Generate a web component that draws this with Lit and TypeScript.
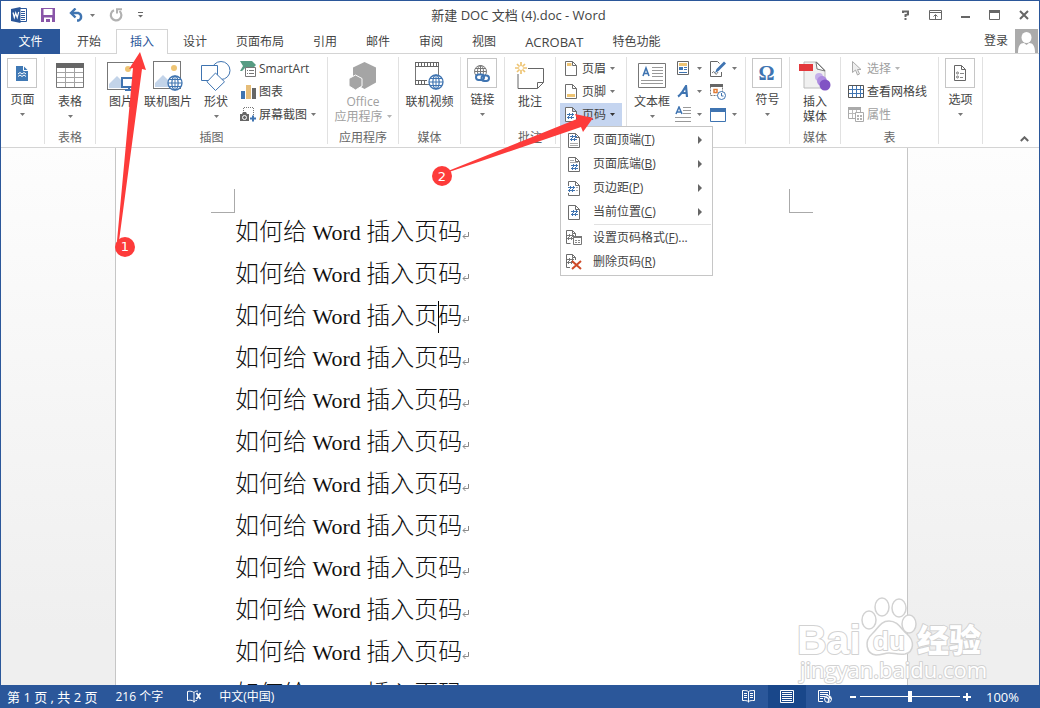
import { LitElement, html, css, svg, nothing, TemplateResult } from "lit";
import { customElement, property, state } from "lit/decorators.js";
import { classMap } from "lit/directives/class-map.js";

const draw = (w: number, h: number, body: unknown) =>
  html`<svg width=${w} height=${h} viewBox="0 0 ${w} ${h}" fill="none" aria-hidden="true">${body}</svg>`;

const BLUE = "#3f74b1";
const INK = "#6d6d6d";
const SAND = "#eec473";

const pageOutline = (c = INK) => svg`<path d="M.5.5h7l4 4v10h-11z M7.5.5v4h4" stroke=${c} fill="#fff"/>`;
const hash = (x: number, y: number, c = BLUE) =>
  svg`<path d="M${x + 2.5} ${y}v3M${x + 1.5} ${y + 3}v3M${x + 5.5} ${y}v3M${x + 4.5} ${y + 3}v3M${x} ${y + 1.5}h7M${x} ${y + 4.5}h7" stroke=${c}/>`;
const globe = (cx: number, cy: number, r: number, c = BLUE) => svg`
  <circle cx=${cx} cy=${cy} r=${r} fill="#fff" stroke=${c} stroke-width="1.3"/>
  <ellipse cx=${cx} cy=${cy} rx=${r * 0.45} ry=${r} stroke=${c} stroke-width="1.2"/>
  <path d="M${cx - r} ${cy}h${r * 2}M${cx} ${cy - r}v${r * 2}M${cx - r * 0.85} ${cy - r / 2}h${r * 1.7}M${cx - r * 0.85} ${cy + r / 2}h${r * 1.7}" stroke=${c}/>`;
const photo = svg`
  <rect x=".5" y="1.5" width="27" height="27" fill="#fff" stroke="#777"/>
  <circle cx="21" cy="8" r="3" fill=${SAND}/>
  <path d="M2 27v-4l8-8 8 8v4z" fill="#c3d4e9"/>`;

const icons: Record<string, TemplateResult> = {
  word: draw(17, 16, svg`
    <path d="M8 1.5h7.5v13H8" fill="#fff" stroke="#2b579a"/>
    <path d="M10 4.5h4M10 6.5h4M10 8.5h4M10 10.5h4M10 12.5h4" stroke="#2b579a"/>
    <path d="M0 2l9.500-2v16L0 14z" fill="#2b579a"/>
    <path d="M2 5.500l1.300 5 1.400-4.500 1.500 4.500 1.500-5.500" stroke="#fff" stroke-width="1.2"/>`),
  save: draw(14, 14, svg`
    <path d="M0 0h14v14H0z" fill="#8955a8"/><path d="M2.500 1h9v6h-9z" fill="#fff"/>
    <path d="M3 9.500h8V14H9v-3H5v3H3z" fill="#fff"/>`),
  undo: draw(16, 14, svg`
    <path d="M2 5h7.500a4 4 0 0 1 0 7.500H8" stroke=${BLUE} stroke-width="2.400"/>
    <path d="M6.500.5L2 5l4.500 4.500" stroke=${BLUE} stroke-width="2.400"/>`),
  redo: draw(14, 14, svg`
    <path d="M5 2.200A5.300 5.300 0 1 0 10.500 3" stroke="#b1b1b1" stroke-width="2.200"/>
    <path d="M8 5.500V1.200h5" stroke="#b1b1b1" stroke-width="2"/>`),
  more: draw(5, 6, svg`<path d="M0 .5h5" stroke="#666"/><path d="M0 3h5L2.500 5.500z" fill="#666"/>`),
  help: draw(8, 10, svg`<path d="M1 3V1.500h5v3L3.500 5v2M2.500 9h2" stroke="#666" stroke-width="2"/>`),
  ribbonMode: draw(13, 10, svg`
    <path d="M.5.500h12v9H.5zM.5 2.500h12" stroke="#666"/><path d="M6.500 9V5M4.500 6.500l2-2 2 2" stroke="#666"/>`),
  minimize: draw(9, 10, svg`<path d="M0 7h9" stroke="#666" stroke-width="2"/>`),
  maximize: draw(11, 10, svg`<path d="M.5.500h10v9H.5z" stroke="#666"/><path d="M0 1.500h11" stroke="#666" stroke-width="3"/>`),
  close: draw(10, 10, svg`<path d="M1 1l8 8M9 1L1 9" stroke="#666" stroke-width="2"/>`),
  avatar: draw(23, 24, svg`
    <path d="M0 0h23v24H0z" fill="#ababab"/><ellipse cx="11.500" cy="8.500" rx="5" ry="5.500" fill="#fff"/>
    <path d="M3 24c0-7 2-10 6-10l2.500 2 2.500-2c4 0 6 3 6 10z" fill="#fff"/>`),
  pages: draw(12, 15, svg`
    <path d="M0 0h7.500L12 4.500V15H0z" fill="#4079b5"/><path d="M7.500 0v4.500H12" stroke="#fff"/>
    <path d="M2 8l2-1.500 2 1.500 2-1.500 2 1.500M2 10.500l2-1.500 2 1.500 2-1.500 2 1.500" stroke="#fff"/>`),
  table: draw(28, 26, svg`
    <path d="M.5.500h27v24H.5z" fill="#fff" stroke="#777"/><path d="M0 0h28v5H0z" fill="#666"/>
    <path d="M1 9.500h26M1 14.500h26M1 19.500h26M9.500 5v19M18.500 5v19" stroke="#a3a3a3"/>`),
  picture: draw(28, 30, svg`${photo}
    <path d="M15 17h14v9H15z" fill="#fff" stroke=${BLUE} stroke-width="2"/><path d="M18 29h8M22 26v3" stroke=${BLUE} stroke-width="2"/>`),
  onlinePicture: draw(30, 31, svg`${photo}${globe(22, 23, 7)}`),
  shapes: draw(30, 30, svg`
    <circle cx="20" cy="9.500" r="9" stroke=${BLUE} fill="#fff"/>
    <path d="M.5 4.500h16v15H.5z" fill="#fff" stroke=${BLUE}/><path d="M14.500 12l9 8.800-9 8.700-8.500-8.700z" fill="#fff" stroke=${BLUE}/>`),
  smartArt: draw(16, 16, svg`
    <path d="M0 0h12l4 4-3 3H5L2 10H0l3-5z" fill="#579c83"/>
    <path d="M5.500 6.500h10v9h-10z" fill="#fff" stroke="#777"/><path d="M7 9.500h1M9 9.500h5M7 12.500h1M9 12.500h5" stroke="#777"/>`),
  chart: draw(15, 14, svg`
    <path d="M0 6h4v8H0z" fill=${BLUE}/><path d="M5 0h5v14H5z" fill="#e6bd79"/><path d="M11 3h4v11h-4z" fill="#666"/>`),
  screenshot: draw(16, 15, svg`
    <path d="M3.500 4V.5h10V8" stroke="#777" stroke-dasharray="1 1"/>
    <path d="M0 7h2l1-2h3l1 2h2v7H0z" fill="#666"/><circle cx="4.500" cy="10.500" r="2" stroke="#fff"/>
    <path d="M10 11.500h6M13 8.500v6" stroke=${BLUE} stroke-width="2"/>`),
  office: draw(28, 28, svg`
    <path d="M15.500 0L27 5.500v15L15.500 27 4 20.500v-15z" fill="#a5a5a5"/>
    <path d="M6.500 13l6.500 3.500v7.500L6.500 28 0 24v-7.500z" fill="#a5a5a5" stroke="#fff"/>`),
  video: draw(29, 28, svg`
    <path d="M.5.500h23v22H.5z" fill="#fff" stroke="#777"/><path d="M0 0h24v5H0zM0 18h12v5H0z" fill="#666"/>
    <path d="M1 2.500h22M1 20.500h11" stroke="#fff" stroke-width="3" stroke-dasharray="2 1"/>
    ${globe(21, 20, 7)}`),
  link: draw(16, 17, svg`
    <circle cx="6.500" cy="6.500" r="6" stroke="#777"/><ellipse cx="6.500" cy="6.500" rx="3" ry="6" stroke="#777"/><path d="M.5 6.500h12M6.500.5v12M1 3.500h11" stroke="#777"/>
    <rect x="2" y="9.500" width="8" height="5.500" rx="2.700" fill="#fff" stroke=${BLUE} stroke-width="2"/>
    <rect x="7.500" y="10.500" width="7.500" height="5.500" rx="2.700" stroke=${BLUE} stroke-width="2"/>`),
  comment: draw(30, 28, svg`
    <path d="M3 12v14.500h19.500l6-6V6.500H13" stroke="#666"/><path d="M22.500 26.500v-6h6" stroke="#666"/>
    <path d="M6 0v12M0 6h12M2 2l8 8M10 2l-8 8" stroke=${SAND} stroke-width="1.700"/><circle cx="6" cy="6" r="2" fill="#fff"/>`),
  header: draw(12, 15, svg`${pageOutline()}<path d="M2 2h4.500v3H2z" fill=${SAND}/>`),
  footer: draw(12, 15, svg`${pageOutline()}<path d="M2 10h8v3H2z" fill=${SAND}/>`),
  pageNumber: draw(12, 15, svg`${pageOutline()}${hash(2, 6)}`),
  textBox: draw(28, 26, svg`
    <path d="M.5.500h27v24H.5z" fill="#fff" stroke="#777"/><path d="M5 13L8 5l3 8M6 10.500h4" stroke=${BLUE} stroke-width="1.600"/>
    <path d="M14 4.500h11M14 7.500h11M14 10.500h11M14 13.500h11M3 17.500h22M3 20.500h22" stroke="#999"/>`),
  quickParts: draw(12, 15, svg`
    <path d="M.5.500h11v13H.5z" fill="#fff" stroke="#666"/><path d="M2 2h8v3H2z" fill=${SAND}/>
    <path d="M2 6h4v3H2z" fill=${BLUE}/><path d="M7 6.500h3M7 8.500h3M2 11.500h8" stroke=${BLUE}/>`),
  wordArt: draw(13, 13, svg`<path d="M1 11.500C5 9 7 4 9 1l1 11M3.500 8H10" stroke=${BLUE} stroke-width="2.200"/>`),
  dropCap: draw(16, 17, svg`
    <path d="M1 8l3-7 3 7M2 6h4" stroke=${BLUE} stroke-width="1.500"/><path d="M8 1.500h8M8 4.500h8M8 7.500h8M0 11.500h16M0 15.500h16" stroke="#999"/>`),
  signature: draw(16, 16, svg`
    <path d="M11.500 11v4.500H.5V.5h7l2 2" stroke="#666"/><path d="M2 12q2-3 3 0t3-1" stroke="#777"/><path d="M5 12l1.500-4L14 .5l2 2-7.500 7.500z" fill=${BLUE}/>`),
  dateTime: draw(16, 16, svg`
    <path d="M.5.500h12v11H.5z" stroke="#777" stroke-dasharray="2 1" fill="#fff"/><path d="M0 0h13v3H0z" fill="#666"/>
    <path d="M4 5.500h3v3H4z" stroke="#e17b35" stroke-width="1.500"/><circle cx="11.500" cy="11.500" r="4" fill="#fff" stroke=${BLUE}/><path d="M11.500 9v3h2" stroke=${BLUE}/>`),
  object: draw(16, 14, svg`<path d="M.5.500h15v13H.5z" fill="#fff" stroke=${BLUE}/><path d="M0 0h16v4H0z" fill=${BLUE}/>`),
  media: draw(32, 32, svg`
    <path d="M5 2h13l8 8v18H5z" fill="#f0f0f0" stroke="#bbb"/><path d="M17 2l9 9-8-2z" fill="#fff" stroke="#777"/>
    <path d="M0 4h14v7H0z" fill="#e3373b"/><circle cx="20" cy="17" r="4" fill="#c5b0ea"/><circle cx="23" cy="21" r="5" fill="#ad8be0"/><circle cx="26" cy="25" r="5.500" fill="#8153c4"/>`),
  select: draw(9, 15, svg`<path d="M.5.500v11l3-2.500 2 5 2-1-2-4.500h3.500z" fill="#eee" stroke="#aaa"/>`),
  gridlines: draw(16, 13, svg`
    <path d="M1 4.500h14M1 8.500h14M4.500 1v11M8.500 1v11M12.500 1v11" stroke=${BLUE}/><path d="M.5.500h15v12H.5z" stroke="#555"/>`),
  properties: draw(16, 15, svg`
    <path d="M.5.500h12v11H.5z" stroke="#aaa"/><path d="M0 0h13v3H0z" fill="#aaa"/><path d="M1 6.500h11M4.500 3v8M8.500 3v8" stroke="#bbb"/>
    <path d="M7.500 5.500h8v9h-8z" fill="#fff" stroke="#aaa"/><path d="M9 9h2M12 9h2M9 12h2M12 12h2" stroke="#999" stroke-width="1.500"/>`),
  options: draw(12, 16, svg`
    <path d="M.5.500h7l4 4v11H.5zM7.500.5v4h4" stroke="#666"/><circle cx="3.500" cy="8" r="1" stroke="#777"/><circle cx="3.500" cy="12" r="1" stroke="#777"/><path d="M6 8.500h4M6 12.500h3" stroke="#888"/>`),
  pageTop: draw(12, 15, svg`${pageOutline()}${hash(2, 2)}<path d="M2 10.500h8M2 12.500h8" stroke="#aaa"/>`),
  pageBottom: draw(12, 15, svg`${pageOutline()}<path d="M2 3.500h4M2 5.500h8" stroke="#aaa"/>${hash(3, 7)}`),
  pageMargin: draw(12, 15, svg`${pageOutline()}<path d="M0 5h7v7H0z" fill="#fff"/>${hash(0, 5)}<path d="M8 6.500h2M8 9.500h2" stroke="#aaa"/>`),
  current: draw(12, 15, svg`${pageOutline()}${hash(3, 5)}`),
  format: draw(16, 16, svg`
    <path d="M4.500 13.500H.5V.5h6l3 3V6M6.500.5v3h3" stroke=${INK}/>${hash(1, 4, "#777")}
    <path d="M7.500 6.500h8v8h-8z" fill="#fff" stroke="#777"/><path d="M7 7h9" stroke="#777" stroke-width="2"/><path d="M9 10.500h2M12 10.500h2M9 12.500h2M12 12.500h2" stroke="#888"/>`),
  remove: draw(16, 16, svg`
    <path d="M4 13.500H.5V.5h6l3 3V6M6.500.5v3h3" stroke=${INK}/>${hash(1, 4, "#777")}
    <path d="M6 7l9 8M15 7l-9 8" stroke="#cf4a28" stroke-width="2"/>`),
  proof: draw(15, 13, svg`
    <path d="M7 11.500C5 10 3 10 .5 10.500v-9C3 1 5 1 7 2.500v10M7 2.500C8 1.500 9 1 11 1M7 12c1-1.500 2-1.500 3-1.500" stroke="#fff"/>
    <path d="M9.500 3l4 6M13.500 3l-4 6" stroke="#fff" stroke-width="1.600"/>`),
  readMode: draw(13, 13, svg`
    <path d="M6.500 1.500C5 .5 3 .5.500.5v10c2.500 0 4.500 0 6 1 1.500-1 3.500-1 6-1V.5c-2.500 0-4.500 0-6 1v11" stroke="#fff"/>
    <path d="M2 3.500h3M2 5.500h3M2 7.500h3M8 3.500h3M8 5.500h3M8 7.500h3" stroke="#fff"/>`),
  printLayout: draw(14, 13, svg`<path d="M.5.500h13v12H.5zM2 2.500h10M2 4.500h10M2 6.500h10M2 8.500h10M2 10.500h10" stroke="#fff"/>`),
  webLayout: draw(14, 13, svg`
    <path d="M5 11.500H.5V.5h11V5M2 2.500h8M2 4.500h8M2 6.500h5M2 8.500h3" stroke="#fff"/><circle cx="10" cy="9" r="3.500" fill="#2b579a" stroke="#fff"/><path d="M7.500 7l2.500 1 1 2-1 2M11 6l1 2h1" stroke="#fff" stroke-width="1.500"/>`),
  collapse: draw(9, 6, svg`<path d="M.8 5l3.700-3.700L8.200 5" stroke="#666" stroke-width="2"/>`),
  enter: draw(8, 8, svg`<path d="M6.500 0v4.500H1M3.500 2L1 4.500 3.500 7" stroke="#888"/>`),
};

const caret = html`<svg class="caret" width="5" height="3" viewBox="0 0 5 3" aria-hidden="true"><path d="M0 0h5L2.500 3z" fill="currentColor"/></svg>`;

const buttonReset = css`
  button { font: inherit; color: inherit; background: none; border: 0; padding: 0; margin: 0; cursor: default; }
  svg { display: block; flex: none; }
`;

@customElement("ribbon-button")
class RibbonButton extends LitElement {
  @property() icon = "";
  @property() label = "";
  @property() second = "";
  @property({ type: Boolean }) boxed = false;
  @property({ type: Boolean }) menu = false;
  @property({ type: Boolean }) off = false;

  static styles = [buttonReset, css`
    :host { display: block; flex: none; }
    .big { display: flex; flex-direction: column; align-items: center; width: 100%; line-height: 15px; white-space: nowrap; }
    .art { display: flex; align-items: center; justify-content: center; height: 37px; }
    .boxed .art { box-sizing: border-box; width: 30px; height: 30px; margin: 1px 2px 4px 0; border: 1px solid #c6c6c6; }
    .off { color: #a0a0a0; }
    .tail { display: flex; align-items: center; justify-content: center; gap: 4px; height: 15px; }
    .caret { color: #777; }
    .off .caret { color: #b5b5b5; }
    .omega { font: bold 20px/26px "Liberation Serif", serif; color: #3f74b1; }
  `];

  render() {
    return html`<button class=${classMap({ big: true, boxed: this.boxed, off: this.off })} ?disabled=${this.off}>
      <span class="art">${this.icon === "omega" ? html`<span class="omega">Ω</span>` : icons[this.icon]}</span>
      <span>${this.label}</span>
      ${this.second || this.menu ? html`<span class="tail">${this.second}${this.menu ? caret : nothing}</span>` : nothing}
    </button>`;
  }
}

@customElement("ribbon-row")
class RibbonRow extends LitElement {
  @property() icon = "";
  @property() label = "";
  @property() name = "";
  @property({ type: Boolean }) menu = false;
  @property({ type: Boolean }) off = false;
  @property({ type: Boolean }) open = false;
  @property({ type: Boolean }) inset = false;

  static styles = [buttonReset, css`
    :host { display: block; }
    .row { display: flex; align-items: center; gap: 3px; height: 23px; width: 100%; white-space: nowrap; }
    .inset { padding-left: 3px; }
    .art { display: flex; justify-content: center; width: 16px; }
    .caret { color: #777; margin-left: 1px; }
    .bare .caret { margin-left: 3px; }
    .off { color: #a0a0a0; }
    .off .caret { color: #b5b5b5; }
    .open { background: #c5d5f0; }
    .open .caret { color: #333; }
  `];

  render() {
    const cls = { row: true, off: this.off, open: this.open, inset: this.inset, bare: !this.label };
    return html`<button class=${classMap(cls)} ?disabled=${this.off} aria-label=${this.label || this.name}>
      <span class="art">${icons[this.icon]}</span>
      ${this.label ? html`<span>${this.label}</span>` : nothing}
      ${this.menu ? caret : nothing}
    </button>`;
  }
}

@customElement("page-number-menu")
class PageNumberMenu extends LitElement {
  private items = [
    { icon: "pageTop", text: "页面顶端", key: "T", sub: true },
    { icon: "pageBottom", text: "页面底端", key: "B", sub: true },
    { icon: "pageMargin", text: "页边距", key: "P", sub: true },
    { icon: "current", text: "当前位置", key: "C", sub: true },
    { icon: "format", text: "设置页码格式", key: "F", tail: "...", rule: true },
    { icon: "remove", text: "删除页码", key: "R" },
  ];

  static styles = [buttonReset, css`
    :host { display: block; box-sizing: border-box; width: 153px; padding: 1px; background: #fff; border: 1px solid #c6c6c6; }
    .item { display: flex; align-items: center; width: 100%; height: 24px; white-space: nowrap; color: #444; }
    .art { display: flex; justify-content: center; width: 24px; margin-right: 7px; }
    .text { flex: 1; text-align: left; }
    .arrow { margin-right: 9px; }
    .rule { height: 1px; margin: 0 0 1px 32px; background: #e1e1e1; }
  `];

  render() {
    return this.items.map((i) => html`
      ${i.rule ? html`<div class="rule"></div>` : nothing}
      <button class="item" role="menuitem">
        <span class="art">${icons[i.icon]}</span>
        <span class="text">${i.text}(<u>${i.key}</u>)${i.tail ?? ""}</span>
        ${i.sub ? html`<svg class="arrow" width="4" height="8" viewBox="0 0 4 8"><path d="M0 0l4 4-4 4z" fill="#666"/></svg>` : nothing}
      </button>`);
  }
}

@customElement("word-ribbon")
class WordRibbon extends LitElement {
  static styles = [buttonReset, css`
    :host { display: flex; box-sizing: border-box; height: 94px; padding: 3px 0; border-bottom: 1px solid #d4d4d4; background: #fff; }
    .group { display: flex; flex-direction: column; box-sizing: border-box; flex: none; height: 87px; border-right: 1px solid #e1e1e1; }
    .body { display: flex; justify-content: center; flex: 1; }
    .start { justify-content: flex-start; }
    .caption { height: 14px; line-height: 16px; text-align: center; color: #666; }
    .w44 { width: 44px; } .w51 { width: 51px; } .w62 { width: 62px; } .w71 { width: 71px; }
    .w98 { width: 98px; } .w119 { width: 119px; } .w232 { width: 232px; }
    .b40 { width: 40px; } .b42 { width: 42px; } .b54 { width: 54px; }
    .in4 { padding: 0 4px; } .in5 { padding: 0 5px; } .in7 { padding-left: 7px; }
    .list { display: flex; flex-direction: column; }
    .gap3 { margin-left: 3px; } .gap8 { margin-left: 8px; }
    .wide { width: 62px; }
    .anchor { position: relative; z-index: 2; }
    .popup { position: absolute; left: 0; top: 100%; }
    .end { display: flex; flex: 1; align-items: flex-end; justify-content: flex-end; padding: 0 10px 2px 0; }
  `];

  private group(width: string, caption: string, body: unknown, extra = "") {
    return html`<section class="group ${width}"><div class="body ${extra}">${body}</div><div class="caption">${caption}</div></section>`;
  }

  render() {
    return html`
      ${this.group("w44", "", html`<ribbon-button icon="pages" label="页面" boxed menu></ribbon-button>`)}
      ${this.group("w51", "表格", html`<ribbon-button icon="table" label="表格" menu></ribbon-button>`)}
      ${this.group("w232", "插图", html`
        <ribbon-button class="b40" icon="picture" label="图片"></ribbon-button>
        <ribbon-button class="b54" icon="onlinePicture" label="联机图片"></ribbon-button>
        <ribbon-button class="b42" icon="shapes" label="形状" menu></ribbon-button>
        <div class="list gap3">
          <ribbon-row icon="smartArt" label="SmartArt"></ribbon-row>
          <ribbon-row icon="chart" label="图表"></ribbon-row>
          <ribbon-row icon="screenshot" label="屏幕截图" menu></ribbon-row>
        </div>`, "start in5")}
      ${this.group("w71", "应用程序", html`<ribbon-button icon="office" label="Office" second="应用程序" menu off></ribbon-button>`)}
      ${this.group("w62", "媒体", html`<ribbon-button icon="video" label="联机视频"></ribbon-button>`)}
      ${this.group("w44", "", html`<ribbon-button icon="link" label="链接" boxed menu></ribbon-button>`)}
      ${this.group("w51", "批注", html`<ribbon-button icon="comment" label="批注"></ribbon-button>`)}
      ${this.group("w71", "", html`
        <div class="list wide">
          <ribbon-row icon="header" label="页眉" menu inset></ribbon-row>
          <ribbon-row icon="footer" label="页脚" menu inset></ribbon-row>
          <div class="anchor">
            <ribbon-row icon="pageNumber" label="页码" menu inset open></ribbon-row>
            <page-number-menu class="popup" role="menu"></page-number-menu>
          </div>
        </div>`, "start in4")}
      ${this.group("w119", "", html`
        <ribbon-button class="b40" icon="textBox" label="文本框" menu></ribbon-button>
        <div class="list gap3">
          <ribbon-row icon="quickParts" name="文档部件" menu></ribbon-row>
          <ribbon-row icon="wordArt" name="艺术字" menu></ribbon-row>
          <ribbon-row icon="dropCap" name="首字下沉" menu></ribbon-row>
        </div>
        <div class="list gap8">
          <ribbon-row icon="signature" name="签名行" menu></ribbon-row>
          <ribbon-row icon="dateTime" name="日期和时间"></ribbon-row>
          <ribbon-row icon="object" name="对象" menu></ribbon-row>
        </div>`, "start in5")}
      ${this.group("w44", "", html`<ribbon-button icon="omega" label="符号" boxed menu></ribbon-button>`)}
      ${this.group("w51", "媒体", html`<ribbon-button icon="media" label="插入" second="媒体"></ribbon-button>`)}
      ${this.group("w98", "表", html`
        <div class="list">
          <ribbon-row icon="select" label="选择" menu off></ribbon-row>
          <ribbon-row icon="gridlines" label="查看网格线"></ribbon-row>
          <ribbon-row icon="properties" label="属性" off></ribbon-row>
        </div>`, "start in7")}
      ${this.group("w44", "", html`<ribbon-button icon="options" label="选项" boxed menu></ribbon-button>`)}
      <div class="end"><button aria-label="折叠功能区">${icons.collapse}</button></div>`;
  }
}

@customElement("word-page")
class WordPage extends LitElement {
  static styles = css`
    :host { display: flex; justify-content: center; overflow: hidden; padding-right: 17px; background: linear-gradient(#fdfdfd, #efefef 90%); }
    .sheet { box-sizing: border-box; width: 793px; flex: none; background: #fff; border: solid #c6c6c6; border-width: 0 1px; padding: 41px 94px 0 95px; }
    .marks { display: flex; justify-content: space-between; height: 22px; }
    .mark { box-sizing: border-box; width: 24px; height: 24px; border-bottom: 1px solid #aaa; }
    .left { border-right: 1px solid #aaa; }
    .right { border-left: 1px solid #aaa; }
    .text { padding-left: 24px; }
    .line { display: flex; align-items: center; margin: 0; height: 42px; color: #111; font: 300 24px/42px "Liberation Serif", "Noto Sans CJK SC", serif; white-space: pre; }
    .latin { font-size: 22px; }
    .cursor { position: relative; }
    .cursor::before { content: ""; position: absolute; left: 0; top: -2px; width: 1px; height: 32px; background: #000; }
    svg { display: block; margin-top: 8px; }
  `;
  render() {
    return html`<article class="sheet">
      <div class="marks"><span class="mark left"></span><span class="mark right"></span></div>
      <div class="text">${Array.from({ length: 12 }, (_, i) => html`<p class="line"><span>如何给<span class="latin"> Word </span>插入页${i === 2 ? html`<span class="cursor">码</span>` : "码"}</span>${icons.enter}</p>`)}</div>
    </article>`;
  }
}

@customElement("app-root")
class AppRoot extends LitElement {
  @state() private tab = "插入";
  private tabs = ["开始", "插入", "设计", "页面布局", "引用", "邮件", "审阅", "视图", "ACROBAT", "特色功能"];

  static styles = [buttonReset, css`
    :host { display: flex; flex-direction: column; position: relative; box-sizing: border-box; height: 100vh; overflow: hidden; border: 1px solid #2b579a; border-bottom: 0; background: #fff; color: #444; font: 12px/16px "Open Sans", "Noto Sans CJK SC", sans-serif; }
    .title { display: flex; align-items: center; height: 28px; flex: none; padding: 0 10px; }
    .quick, .window { display: flex; align-items: center; flex: 1; }
    .quick .undo { margin-left: 14px; }
    .quick .save { margin-left: 13px; }
    .quick .drop { margin: 0 0 0 5px; color: #777; }
    .quick .redo { margin-left: 14px; }
    .quick .more { margin-left: 15px; }
    .window { justify-content: flex-end; gap: 19px; }
    h1 { margin: 0 3px 0 0; font-size: 13px; font-weight: 400; }
    .tabs { display: flex; height: 25px; flex: none; border-bottom: 1px solid #d4d4d4; box-sizing: border-box; }
    .file { width: 59px; height: 25px; margin-right: 3px; background: #2b579a; color: #fff; }
    .tab { box-sizing: border-box; height: 25px; padding: 0 14px; margin-right: 1px; }
    .latin { font-size: 13px; }
    .on { padding: 0 13px; border: 1px solid #d4d4d4; border-bottom: 0; background: #fff; color: #2b579a; }
    .user { display: flex; align-items: center; gap: 7px; margin-left: auto; padding-right: 1px; }
    word-ribbon { flex: none; position: relative; z-index: 2; }
    word-page { flex: 1; min-height: 0; }
    .status { display: flex; align-items: center; flex: none; height: 23px; padding: 0 20px 0 6px; background: #2b579a; color: #fff; }
    .status .item { margin-right: 18px; line-height: 20px; white-space: nowrap; }
    .status .pages { font-size: 13px; }
    .status .proof { margin-right: 17px; margin-left: 6px; }
    .views { display: flex; align-items: center; margin-left: auto; height: 23px; }
    .view { display: flex; align-items: center; justify-content: center; width: 38px; height: 23px; }
    .chosen { background: #19478a; }
    .zoom { display: flex; align-items: center; margin-left: 5px; }
    .zoom input { appearance: none; width: 100px; height: 11px; margin: 0 3px; background: linear-gradient(#fff, #fff) center / 100% 1px no-repeat; }
    .zoom input::-webkit-slider-thumb { appearance: none; width: 4px; height: 11px; background: #fff; }
    .percent { margin-left: 15px; font-size: 13px; }
    .notes { position: absolute; left: -1px; top: -1px; z-index: 3; pointer-events: none; }
    .notes text { font: 13px "DejaVu Sans", sans-serif; fill: #fff; text-anchor: middle; }
    .brand { position: absolute; right: 47px; bottom: 23px; pointer-events: none; }
    .brand text { fill: #fff; stroke: #d2d2d2; stroke-width: 2px; paint-order: stroke; stroke-linejoin: round; }
    .big { font: bold 41px "Liberation Sans", sans-serif; }
    .cn { font: 900 32px "Noto Sans CJK SC", sans-serif; }
    .du { font: bold 26px "Liberation Sans", sans-serif; }
    .url { font: 22px "Open Sans", sans-serif; }
  `];

  render() {
    return html`
      <header class="title">
        <div class="quick">
          ${icons.word}
          <button class="save" aria-label="保存">${icons.save}</button>
          <button class="undo" aria-label="撤消">${icons.undo}</button>
          <button class="drop" aria-label="撤消列表">${caret}</button>
          <button class="redo" aria-label="重复">${icons.redo}</button>
          <button class="more" aria-label="自定义快速访问工具栏">${icons.more}</button>
        </div>
        <h1>新建 DOC 文档 (4).doc - Word</h1>
        <div class="window">
          <button aria-label="帮助">${icons.help}</button>
          <button aria-label="功能区显示选项">${icons.ribbonMode}</button>
          <button aria-label="最小化">${icons.minimize}</button>
          <button aria-label="最大化">${icons.maximize}</button>
          <button aria-label="关闭">${icons.close}</button>
        </div>
      </header>
      <nav class="tabs">
        <button class="file">文件</button>
        ${this.tabs.map((t) => html`<button class=${classMap({ tab: true, latin: /^[A-Z]+$/.test(t), on: t === this.tab })} @click=${() => (this.tab = t)}>${t}</button>`)}
        <button class="user"><span>登录</span>${icons.avatar}</button>
      </nav>
      <word-ribbon></word-ribbon>
      <word-page></word-page>
      <footer class="status">
        <span class="item pages">第 1 页 , 共 2 页</span>
        <span class="item">216 个字</span>
        <button class="proof" aria-label="校对">${icons.proof}</button>
        <span class="item">中文(中国)</span>
        <div class="views">
          <button class="view" aria-label="阅读视图">${icons.readMode}</button>
          <button class="view chosen" aria-label="页面视图">${icons.printLayout}</button>
          <button class="view" aria-label="Web 版式视图">${icons.webLayout}</button>
        </div>
        <div class="zoom">
          <button aria-label="缩小">${draw(8, 8, svg`<path d="M1 4h6" stroke="#fff" stroke-width="2"/>`)}</button>
          <input type="range" min="0" max="100" value="50" aria-label="缩放">
          <button aria-label="放大">${draw(8, 8, svg`<path d="M0 4h8M4 0v8" stroke="#fff" stroke-width="2"/>`)}</button>
          <span class="percent">100%</span>
        </div>
      </footer>
      <svg class="brand" width="202" height="90" viewBox="0 0 202 90">
        <text class="big" x="7" y="59">Bai</text>
        <g fill="#fff" stroke="#d2d2d2" stroke-width="1.500">
          <path d="M99 26c-9 0-11 8-17 13-8 7-6 20 4 21 6 0 8-2 13-2s9 2 16 1c9-2 10-13 2-20-6-5-9-13-18-13z"/>
          <ellipse cx="79" cy="25" rx="7" ry="9"/><ellipse cx="92" cy="12" rx="7" ry="9"/><ellipse cx="109" cy="13" rx="7" ry="9"/><ellipse cx="119" cy="29" rx="7" ry="9"/>
        </g>
        <text class="du" x="83" y="55">du</text>
        <text class="cn" x="127" y="57">经验</text>
        <text class="url" x="10" y="83">jingyan.baidu.com</text>
      </svg>
      <svg class="notes" width="720" height="280" viewBox="0 0 720 280">
        <g fill="#fd3b3a">
          <path d="M117 241L133 68l-4 1 11-17 6 18-4-1L119 241z"/>
          <path d="M448 171L577 119l-2-5 18 4-10 14-2-5L449 172z"/>
          <circle cx="125" cy="247" r="10"/><circle cx="442" cy="176" r="10"/>
        </g>
        <text x="125" y="251">1</text><text x="442" y="181">2</text>
      </svg>`;
  }
}
